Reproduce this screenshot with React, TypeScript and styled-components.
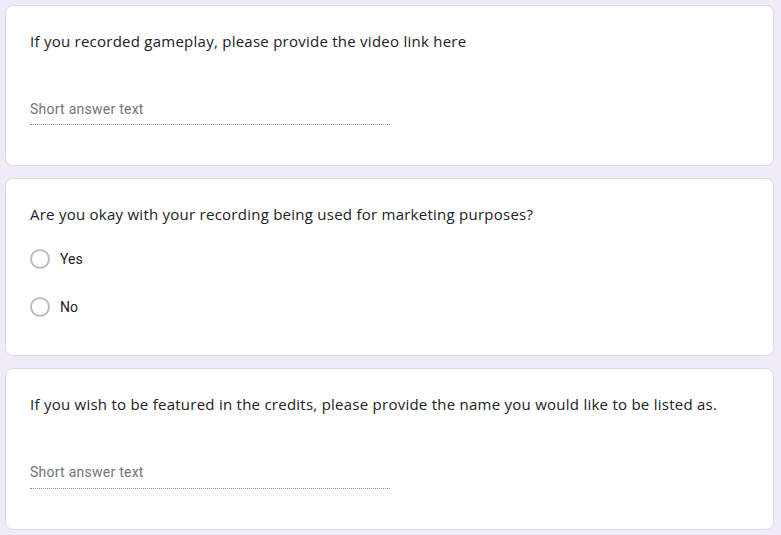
import React from "react";
import styled, { createGlobalStyle } from "styled-components";

const Global = createGlobalStyle`
  html, body { margin: 0; padding: 0; background: #f0ebf8; }
  body { font-family: Roboto, "Noto Sans", sans-serif; }
`;

const Page = styled.div`
  display: flex;
  flex-direction: column;
  gap: 12px;
  padding: 5px 7px 5px 5px;
`;

const Card = styled.section`
  background: #fff;
  border: 1px solid #dadce0;
  border-radius: 8px;
  padding: 23px 24px 0 24px;
  box-sizing: border-box;
`;

const Question = styled.div`
  font-family: "Open Sans", Roboto, sans-serif;
  font-size: 15px;
  line-height: 24px;
  color: #202124;
  letter-spacing: 0.25px;
`;

const ShortAnswer = styled.div<{ $h?: number }>`
  width: 360px;
  margin-top: 39px;
  margin-bottom: 40px;
  height: ${(p) => p.$h ?? 33}px;
  box-sizing: border-box;
  padding-top: 8px;
  border-bottom: 1px dotted #8a8a8a;
  font-family: Roboto, sans-serif;
  font-size: 14px;
  line-height: 18px;
  letter-spacing: 0.25px;
  color: #70757a;
`;

const Options = styled.div`
  display: flex;
  flex-direction: column;
  margin-top: 9px;
  margin-bottom: 24px;
`;

const Option = styled.label`
  display: flex;
  align-items: center;
  gap: 10px;
  height: 48px;
  font-family: Roboto, sans-serif;
  font-size: 14px;
  color: #202124;
`;

const Radio = styled.span`
  width: 20px;
  height: 20px;
  box-sizing: border-box;
  border: 2px solid #bdbdbd;
  border-radius: 50%;
  flex: none;
`;

export default function App() {
  return (
    <>
      <Global />
      <Page>
        <Card>
          <Question>If you recorded gameplay, please provide the video link here</Question>
          <ShortAnswer>Short answer text</ShortAnswer>
        </Card>
        <Card>
          <Question>Are you okay with your recording being used for marketing purposes?</Question>
          <Options>
            <Option>
              <Radio />
              Yes
            </Option>
            <Option>
              <Radio />
              No
            </Option>
          </Options>
        </Card>
        <Card>
          <Question>If you wish to be featured in the credits, please provide the name you would like to be listed as.</Question>
          <ShortAnswer $h={34}>Short answer text</ShortAnswer>
        </Card>
      </Page>
    </>
  );
}
